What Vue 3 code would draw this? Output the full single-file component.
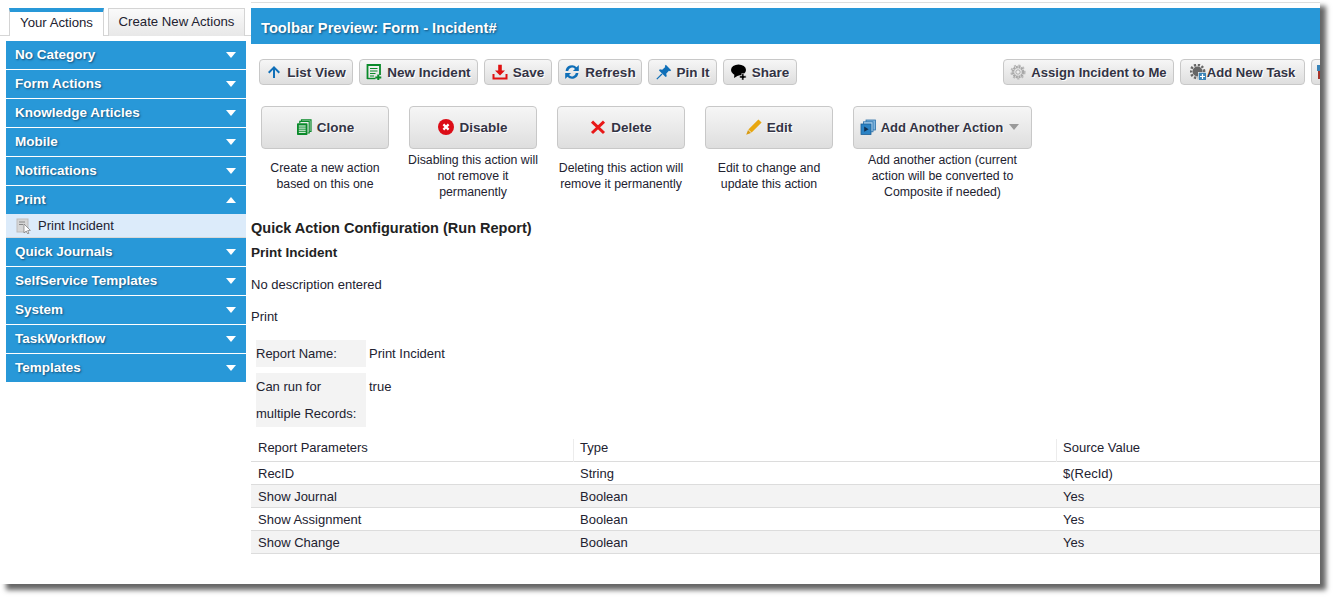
<script setup>
const icons = {
  up: '<path d="M8 2 L14 8 L12.6 9.4 L9 5.8 V14 H7 V5.8 L3.4 9.4 L2 8Z" fill="#0f6fb8"/>',
  newdoc: '<path d="M1.5 15V1H14V11" fill="none" stroke="#0a8a2a" stroke-width="1.8"/><path d="M1 14.5H9.5" stroke="#0a8a2a" stroke-width="1.4"/><path d="M4 4.5H11.5M4 7H11.5M4 9.5H9.5M4 12H8" stroke="#0a8a2a" stroke-width="1.2"/><path d="M11.3 10.4h2v2h2v2h-2v2h-2v-2h-2v-2h2z" fill="#0a8a2a"/>',
  save: '<path d="M6.2 .8h3.6v5.7H13L8 11.5 3 6.5h3.2z" fill="#e01010"/><path d="M1.5 10V14.5H14.5V10" fill="none" stroke="#e01010" stroke-width="2"/>',
  refresh: '<path d="M1.6 7A6.4 6.4 0 0 1 12.6 3.2L14.8 1V7H8.9L11 4.9A3.9 3.9 0 0 0 4.2 7Z" fill="#0f6fb8"/><path d="M14.4 9A6.4 6.4 0 0 1 3.4 12.8L1.2 15V9H7.1L5 11.1A3.9 3.9 0 0 0 11.8 9Z" fill="#0f6fb8"/>',
  pin: '<path d="M9.8 .8 L15.2 6.2 L14 7.2 L12.9 6.8 L10.2 9.8 L10.8 12.2 L9.6 13 L3 6.4 L3.8 5.2 L6.2 5.8 L9.2 3.1 L8.8 2Z" fill="#0f6fb8"/><path d="M6 10 L.8 15.2" stroke="#0f6fb8" stroke-width="1.2"/>',
  share: '<ellipse cx="7.5" cy="6" rx="7.5" ry="5.6"/><path d="M3.5 9.5 L3 14 L8 11Z"/><path d="M10.7 9.6h2.2v2.2h2.2V14h-2.2v2.2h-2.2V14H8.5v-2.2h2.2z" stroke="#eee" stroke-width=".6"/>',
  gear: '<circle cx="8" cy="8" r="5" fill="none" stroke="#a8a8a8" stroke-width="2.6" stroke-dasharray="2 .6"/><circle cx="8" cy="8" r="6.8" fill="none" stroke="#b8b8b8" stroke-width="1.6" stroke-dasharray="2.2 2.4"/><circle cx="8" cy="8" r="2.2" fill="#eee" stroke="#999" stroke-width=".8"/>',
  gearadd: '<circle cx="7.5" cy="7.5" r="5" fill="#666"/><circle cx="7.5" cy="7.5" r="6.6" fill="none" stroke="#666" stroke-width="2.6" stroke-dasharray="2.2 1.7"/><rect x="8.5" y="8.5" width="8" height="8" fill="#3a84b8" stroke="#e8f0f5" stroke-width=".7"/><path d="M12.5 10v5M10 12.5h5" stroke="#fff" stroke-width="1.2"/>',
  task: '<rect x="3" y="1" width="8" height="6" fill="#3a84b8"/><rect x="4" y="7" width="8" height="8" fill="#a5342a"/>',
  clone: '<path d="M5.5 2.5V.8H15V12.5H13.4" fill="none" stroke="#0a8a2a" stroke-width="1.2"/><path d="M3.8 4.2V2.4H13.2V14H11.6" fill="none" stroke="#0a8a2a" stroke-width="1.2"/><rect x="1" y="4.2" width="10.5" height="11.8" rx=".8" fill="#0a8a2a"/><path d="M2.8 7H9.7M2.8 9.1H9.7M2.8 11.2H9.7M2.8 13.3H9.7" stroke="#fff" stroke-width="1"/>',
  disable: '<circle cx="8" cy="8" r="8" fill="#dc0d17"/><path d="M5.4 5.4L10.6 10.6M10.6 5.4L5.4 10.6" stroke="#fff" stroke-width="2.2"/>',
  del: '<path d="M2 2.6L14 14M14 2.6L2 14" stroke="#e81818" stroke-width="3"/>',
  edit: '<path d="M12.4 .6 L15.6 3.6 L5.6 13.4 L2.4 10.4Z" fill="#e8a70f"/><path d="M2 11 L5 13.9 L.2 15.8Z" fill="#d89a10"/>',
  another: '<rect x="6" y="1" width="9.5" height="10" fill="#7fb6e0" stroke="#2a6fa8" stroke-width=".8"/><rect x="3.5" y="2.8" width="9.5" height="10" fill="#a8d0ee" stroke="#2a6fa8" stroke-width=".8"/><rect x="1" y="5" width="10" height="10.5" fill="#2a82c4" stroke="#1c5f96" stroke-width=".8"/><path d="M4.2 7.6L8.6 10.2L4.2 12.8Z" fill="#102f50"/>'
}
const groups = ['No Category','Form Actions','Knowledge Articles','Mobile','Notifications','Print','Quick Journals','SelfService Templates','System','TaskWorkflow','Templates']
const leftTools = [
  { label: 'List View', icon: 'up', w: 94 },
  { label: 'New Incident', icon: 'newdoc', w: 119 },
  { label: 'Save', icon: 'save', w: 68 },
  { label: 'Refresh', icon: 'refresh', w: 84 },
  { label: 'Pin It', icon: 'pin', w: 69 },
  { label: 'Share', icon: 'share', w: 74 }
]
const rightTools = [
  { label: 'Assign Incident to Me', icon: 'gear', w: 171 },
  { label: 'Add New Task', icon: 'gearadd', w: 125, tight: true },
  { label: '', icon: 'task', w: 40 }
]
const actions = [
  { label: 'Clone', icon: 'clone', desc: 'Create a new action\nbased on this one', top: 11, w: 128 },
  { label: 'Disable', icon: 'disable', desc: 'Disabling this action will\nnot remove it\npermanently', top: 3, w: 128 },
  { label: 'Delete', icon: 'del', desc: 'Deleting this action will\nremove it permanently', top: 11, w: 128 },
  { label: 'Edit', icon: 'edit', desc: 'Edit to change and\nupdate this action', top: 11, w: 128 },
  { label: 'Add Another Action', icon: 'another', desc: 'Add another action (current\naction will be converted to\nComposite if needed)', top: 3, w: 179, caret: true }
]
const rows = [
  ['RecID', 'String', '$(RecId)'],
  ['Show Journal', 'Boolean', 'Yes'],
  ['Show Assignment', 'Boolean', 'Yes'],
  ['Show Change', 'Boolean', 'Yes']
]
</script>

<template>
  <div class="window">
    <aside class="side">
      <div class="tabs">
        <div class="tab active">Your Actions</div>
        <div class="tab">Create New Actions</div>
      </div>
      <div class="acc">
        <template v-for="g in groups" :key="g">
          <div class="group">
            <span>{{ g }}</span>
            <i :class="g === 'Print' ? 'arrow up' : 'arrow'"></i>
          </div>
          <div v-if="g === 'Print'" class="sub">
            <svg class="subico" viewBox="0 0 16 16">
              <rect x="1" y="1" width="11" height="13" fill="#d6d6d6" stroke="#bdbdbd"/>
              <path d="M3 4h6M3 6.5h4" stroke="#888"/>
              <path d="M8 6 L8 15 L10.2 13 L11.8 16 L13 15.4 L11.6 12.6 L14.4 12.4Z" fill="#fff" stroke="#777" stroke-width=".7"/>
            </svg>
            <span>Print Incident</span>
          </div>
        </template>
      </div>
    </aside>

    <main class="main">
      <div class="topline"></div>
      <h1 class="banner">Toolbar Preview: Form - Incident#</h1>

      <div class="toolbar">
        <div class="tools">
          <button v-for="t in leftTools" :key="t.label" class="btn" :style="{ width: t.w + 'px' }">
            <svg class="ico" viewBox="0 0 16 16" v-html="icons[t.icon]"></svg>{{ t.label }}
          </button>
        </div>
        <div class="tools right">
          <button v-for="t in rightTools" :key="t.icon" :class="['btn', { tight: t.tight, cut: !t.label }]" :style="{ width: t.w + 'px' }">
            <svg class="ico" viewBox="0 0 16 16" v-html="icons[t.icon]"></svg>{{ t.label }}
          </button>
        </div>
      </div>

      <div class="actions">
        <div v-for="a in actions" :key="a.label" class="action" :style="{ width: a.w + 'px' }">
          <button :class="['big', { wide: a.caret }]">
            <svg class="ico" viewBox="0 0 16 16" v-html="icons[a.icon]"></svg>{{ a.label }}<i v-if="a.caret" class="caret"></i>
          </button>
          <p class="desc" :style="{ marginTop: a.top + 'px' }">{{ a.desc }}</p>
        </div>
      </div>

      <h2 class="title">Quick Action Configuration (Run Report)</h2>
      <h3 class="name">Print Incident</h3>
      <p class="line">No description entered</p>
      <p class="line">Print</p>

      <div class="kv">
        <div class="key">Report Name:</div><div class="val">Print Incident</div>
        <div class="key">Can run for<br>multiple Records:</div><div class="val">true</div>
      </div>

      <div class="grid head">
        <div>Report Parameters</div><div>Type</div><div>Source Value</div>
      </div>
      <div class="rows">
        <div v-for="r in rows" :key="r[0]" class="grid row">
          <div v-for="c in r" :key="c">{{ c }}</div>
        </div>
      </div>
    </main>
  </div>
</template>

<style scoped>
.window {
  display: flex;
  width: 1320px;
  height: 584px;
  overflow: hidden;
  background: #fff;
  font: 13px "Liberation Sans", Arial, sans-serif;
  color: #222230;
}
.side { width: 251px; flex: none; }
.tabs {
  display: flex;
  gap: 4px;
  height: 28px;
  margin-top: 8px;
  padding-left: 9px;
  border-bottom: 1px solid #d6d6d6;
  box-sizing: border-box;
}
.tab {
  box-sizing: border-box;
  width: 137px;
  height: 28px;
  padding-top: 5px;
  border: 1px solid #d4d4d4;
  border-bottom: 0;
  text-align: center;
  font-size: 13.2px;
  background: linear-gradient(#fafafa, #e8e8e8);
}
.tab.active {
  width: 95px;
  padding-top: 3px;
  border-top: 4px solid #2898d8;
  background: #fff;
}
.acc { margin: 5px 5px 0 6px; }
.group {
  display: flex;
  align-items: center;
  justify-content: space-between;
  box-sizing: border-box;
  height: 29px;
  padding: 0 10px 2px 9px;
  border-bottom: 1px solid #fff;
  background: #2898d8;
  color: #fff;
  font-weight: bold;
  font-size: 13.5px;
  text-shadow: 1px 1px 2px #14507a;
}
.arrow {
  width: 0;
  height: 0;
  margin-top: 1px;
  border: 5px solid transparent;
  border-top: 6px solid #fff;
  border-bottom: 0;
}
.arrow.up {
  border-top: 0;
  border-bottom: 6px solid #fff;
}
.sub {
  display: flex;
  align-items: center;
  gap: 6px;
  box-sizing: border-box;
  height: 24px;
  margin-top: -1px;
  padding: 0 0 0 10px;
  border-bottom: 1px solid #d8d8d8;
  background: #dcebfa;
}
.subico { width: 16px; height: 16px; flex: none; }
.main { flex: 1; min-width: 0; overflow: hidden; }
.topline { height: 1px; margin-top: 2px; background: #dedede; }
.banner {
  box-sizing: border-box;
  height: 36px;
  margin: 5px 0 0;
  padding: 0 10px;
  line-height: 40px;
  background: #2898d8;
  color: #fff;
  font-size: 14.7px;
  font-weight: bold;
  text-shadow: 1px 1px 2px #14507a;
}
.toolbar {
  display: flex;
  justify-content: space-between;
  margin: 15px 0 0 8px;
  width: 1092px;
}
.tools { display: flex; gap: 6px; }
.btn, .big {
  display: flex;
  align-items: center;
  justify-content: center;
  flex: none;
  box-sizing: border-box;
  padding: 0;
  border: 1px solid #c8c8c8;
  background: linear-gradient(#f6f6f6, #dedede);
  color: #333344;
  font: bold 13.5px "Liberation Sans", Arial, sans-serif;
  text-shadow: 1px 1px 0 #fff;
}
.btn {
  height: 26px;
  border-radius: 4px;
  gap: 5px;
}
.right .btn { font-size: 13.1px; }
.btn.tight { gap: 1px; }
.btn.cut { justify-content: flex-start; padding-left: 2px; }
.ico { width: 16px; height: 16px; flex: none; }
.actions {
  display: flex;
  gap: 20px;
  margin: 21px 0 0 10px;
  align-items: flex-start;
}
.action { flex: none; text-align: center; }
.big {
  width: 100%;
  height: 43px;
  border-radius: 4px;
  gap: 5px;
  padding-bottom: 1px;
}
.big.wide { font-size: 13.1px; padding-right: 6px; }
.caret {
  width: 0;
  height: 0;
  margin-left: 1px;
  border: 5px solid transparent;
  border-top: 6px solid #999;
  border-bottom: 0;
}
.desc {
  margin: 0 -8px;
  line-height: 16px;
  font-size: 12.3px;
  white-space: pre-line;
}
.title {
  margin: 18px 0 0;
  font-size: 14.5px;
  line-height: 20px;
  color: #222;
}
.name {
  margin: 5px 0 0;
  font-size: 13.5px;
  line-height: 20px;
  color: #222;
}
.line { margin: 12px 0 0; line-height: 20px; }
.kv {
  display: grid;
  grid-template-columns: 110px auto;
  justify-content: start;
  row-gap: 6px;
  column-gap: 3px;
  margin: 13px 0 0 5px;
  line-height: 27px;
}
.key { background: #f3f3f3; }
.grid {
  display: grid;
  grid-template-columns: 322px 483px 1fr;
  box-sizing: border-box;
  border-bottom: 1px solid #dcdcdc;
}
.grid > div { padding-left: 7px; }
.head {
  height: 29px;
  line-height: 29px;
  margin-top: 6px;
}
.head > div + div { border-left: 1px solid #ececec; margin-top: 6px; line-height: 17px; padding-left: 6px; }
.row { height: 23px; line-height: 23px; }
.row:nth-child(even) { background: #f3f3f3; }
</style>

<style>
html, body { background: #fff; margin: 0; min-height: 599px; }
#app { position: relative; width: 1320px; height: 584px; box-shadow: 6px 6px 5px #666; }
</style>
